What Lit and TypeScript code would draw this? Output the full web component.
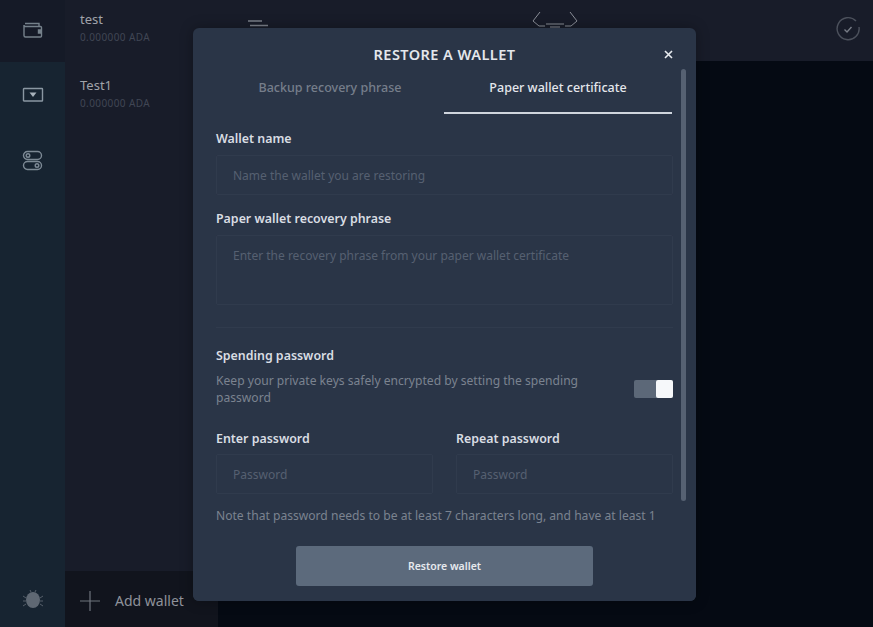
import { LitElement, html, css } from "lit";
import { customElement } from "lit/decorators.js";

@customElement("app-root")
export class AppRoot extends LitElement {
  static styles = css`
    :host { display: block; width: 873px; height: 627px; position: relative; overflow: hidden; background: #050a13; font-family: "Noto Sans", "Open Sans", sans-serif; }
    .shell { display: grid; grid-template-columns: 65px 153px 1fr; height: 627px; }
    .nav { display: flex; flex-direction: column; background: #172431; }
    .nav-top { height: 62px; background: #151a27; display: flex; align-items: center; justify-content: center; padding-bottom: 2px; box-sizing: border-box; }
    .nav-mid { flex: 1; display: flex; flex-direction: column; align-items: center; padding-top: 25px; gap: 48px; }
    .nav-bottom { height: 58px; display: flex; align-items: flex-start; justify-content: center; padding-top: 20px; box-sizing: border-box; }
    .wallets { display: flex; flex-direction: column; background: #181c29; }
    .wallet { height: 66px; padding: 10px 0 0 15px; box-sizing: border-box; }
    .wallet-name { font-size: 13px; line-height: 18px; color: #a0a3aa; }
    .wallet-ada { font-size: 10px; line-height: 14px; margin-top: 2px; letter-spacing: .4px; color: #404654; }
    .spacer { flex: 1; }
    .add { height: 56px; background: #11141d; display: flex; align-items: flex-start; padding: 20px 0 0 15px; box-sizing: border-box; gap: 15px; color: #8f929a; font-size: 14px; line-height: 20px; white-space: nowrap; }
    .main { display: flex; flex-direction: column; }
    .top { height: 61px; background: #181c29; display: flex; padding: 0 12px 0 30px; box-sizing: border-box; }
    .burger { margin-top: 20px; }
    .logo { margin: 11px 0 0 263px; }
    .status { margin: 16px 0 0 auto; }
    .content { flex: 1; background: #050a13; }
    .overlay { position: absolute; left: 193px; top: 28px; width: 503px; height: 573px; background: #2a3547; border-radius: 6px; box-shadow: 0 0 14px rgba(0,0,0,.3); overflow: hidden; padding: 0 23px; box-sizing: border-box; color: #e4e7ec; }
    .title { font-size: 14.5px; font-weight: 600; letter-spacing: .45px; text-align: center; line-height: 20px; padding-top: 16px; }
    .close { position: absolute; right: 23px; top: 22px; }
    .bar { position: absolute; left: 488px; top: 41px; width: 5px; height: 432px; border-radius: 3px; background: #566172; }
    .tabs { display: grid; grid-template-columns: 228px 228px; margin-top: 10px; }
    .tab { height: 40px; padding-top: 5px; box-sizing: border-box; text-align: center; font-size: 12.5px; line-height: 18px; font-weight: 500; color: #767e8b; }
    .tab.on { color: #e4e7ec; border-bottom: 2px solid #cfd5dd; }
    .label { font-size: 12.4px; font-weight: 600; line-height: 18px; color: #d9dde3; }
    .field { border: 1px solid #303b4d; border-radius: 2px; box-sizing: border-box; padding: 0 16px; color: #566071; font-size: 12px; display: flex; align-items: center; }
    .name { margin-top: 16px; }
    .input { height: 40px; width: 457px; margin-top: 7px; }
    .phrase-label { margin-top: 15px; }
    .area { height: 70px; width: 457px; margin-top: 7px; align-items: flex-start; padding-top: 12px; line-height: 16px; }
    .rule { height: 1px; background: #303b4d; margin-top: 22px; width: 457px; }
    .spend { margin-top: 19px; }
    .spend-row { display: flex; justify-content: space-between; align-items: center; width: 457px; margin-top: 7px; }
    .hint { width: 400px; font-size: 12.1px; line-height: 17px; color: #7b8390; }
    .switch { width: 39px; height: 18px; border-radius: 2px; background: #5c6878; display: flex; justify-content: flex-end; }
    .knob { width: 17px; height: 18px; border-radius: 2px; background: #f6f8fa; }
    .pw { display: grid; grid-template-columns: 217px 217px; column-gap: 23px; margin-top: 24px; }
    .pw .input { width: 217px; margin-top: 6px; }
    .note { font-size: 12.1px; line-height: 16px; color: #7b8390; margin-top: 14px; white-space: nowrap; }
    .btn-wrap { position: absolute; left: 0; right: 0; bottom: 0; height: 71px; background: #2a3547; display: flex; justify-content: center; }
    .btn { width: 297px; height: 40px; border-radius: 3px; background: #5c6a7c; color: #e6e9ee; font-size: 10.5px; font-weight: 600; display: flex; align-items: center; justify-content: center; margin-top: 16px; }
    svg { display: block; }
  `;

  render() {
    return html`
      <div class="shell">
        <div class="nav">
          <div class="nav-top">
            <svg width="22" height="18" viewBox="0 0 22 18" fill="none" stroke="#75818b" stroke-width="1.4">
              <path d="M3 2.5h14v3M2 4v10.5a1.5 1.5 0 0 0 1.5 1.5h15a1 1 0 0 0 1-1V6.5a1 1 0 0 0-1-1H3.5A1.5 1.5 0 0 1 2 4Z" />
              <path d="M20 9h-3.5v3H20" fill="#75818b" />
            </svg>
          </div>
          <div class="nav-mid">
            <svg width="22" height="15" viewBox="0 0 22 15" fill="none" stroke="#8a97a2" stroke-width="1.4">
              <rect x="1.5" y="1.5" width="19" height="12.5" rx=".5" />
              <path d="M7.5 5.5h7L11 10Z" fill="#a8b2bb" stroke="none" />
            </svg>
            <svg width="21" height="21" viewBox="0 0 21 21" fill="none" stroke="#7d8a95" stroke-width="1.4">
              <rect x="1.5" y="1.5" width="18" height="8" rx="4" />
              <circle cx="6" cy="5.5" r="1.8" />
              <rect x="1.5" y="11.5" width="18" height="8" rx="4" />
              <circle cx="15" cy="15.5" r="1.8" />
            </svg>
          </div>
          <div class="nav-bottom">
            <svg width="22" height="22" viewBox="0 0 22 22" fill="#5f6873" stroke="#565f6a" stroke-width="1">
              <ellipse cx="11" cy="11" rx="7" ry="8" stroke="none" />
              <path d="M1 7l3 2M1 12h3M1 17l3-2M21 7l-3 2M21 12h-3M21 17l-3-2M8 1l1 2M14 1l-1 2" />
            </svg>
          </div>
        </div>
        <div class="wallets">
          <div class="wallet"><div class="wallet-name">test</div><div class="wallet-ada">0.000000 ADA</div></div>
          <div class="wallet"><div class="wallet-name">Test1</div><div class="wallet-ada">0.000000 ADA</div></div>
          <div class="spacer"></div>
          <div class="add">
            <svg width="20" height="20" viewBox="0 0 20 20" stroke="#6f747d" stroke-width="1.2"><path d="M10 0v20M0 10h20" /></svg>
            <span>Add wallet</span>
          </div>
        </div>
        <div class="main">
          <div class="top">
            <svg class="burger" width="20" height="12" viewBox="0 0 20 12" stroke="#7a7f89" stroke-width="1.4">
              <path d="M0 1h14M2 5.5h18M4 10h14" />
            </svg>
            <svg class="logo" width="48" height="20" viewBox="0 0 48 20" fill="none" stroke="#8b8f98" stroke-width="1">
              <path d="M9 1 2 10l6 5h6M39 1l7 9-6 5h-6M15 13h18M19 16h10" />
            </svg>
            <svg class="status" width="26" height="26" viewBox="0 0 26 26" fill="none" stroke="#4c515c" stroke-width="1.4">
              <path d="M21 5a11 11 0 1 0 3 6" /><path d="M9.5 13.5l2.5 2.5 4.5-5" stroke="#777c86" />
            </svg>
          </div>
          <div class="content"></div>
        </div>
      </div>

      <div class="overlay">
        <div class="title">RESTORE A WALLET</div>
        <svg class="close" width="9" height="9" viewBox="0 0 9 9" stroke="#e8ebef" stroke-width="1.6"><path d="M1 1l7 7M8 1L1 8" /></svg>
        <div class="bar"></div>
        <div class="tabs">
          <div class="tab">Backup recovery phrase</div>
          <div class="tab on">Paper wallet certificate</div>
        </div>
        <div class="label name">Wallet name</div>
        <div class="field input">Name the wallet you are restoring</div>
        <div class="label phrase-label">Paper wallet recovery phrase</div>
        <div class="field area">Enter the recovery phrase from your paper wallet certificate</div>
        <div class="rule"></div>
        <div class="label spend">Spending password</div>
        <div class="spend-row">
          <div class="hint">Keep your private keys safely encrypted by setting the spending password</div>
          <div class="switch"><div class="knob"></div></div>
        </div>
        <div class="pw">
          <div><div class="label">Enter password</div><div class="field input">Password</div></div>
          <div><div class="label">Repeat password</div><div class="field input">Password</div></div>
        </div>
        <div class="note">Note that password needs to be at least 7 characters long, and have at least 1</div>
        <div class="btn-wrap"><div class="btn">Restore wallet</div></div>
      </div>
    `;
  }
}
